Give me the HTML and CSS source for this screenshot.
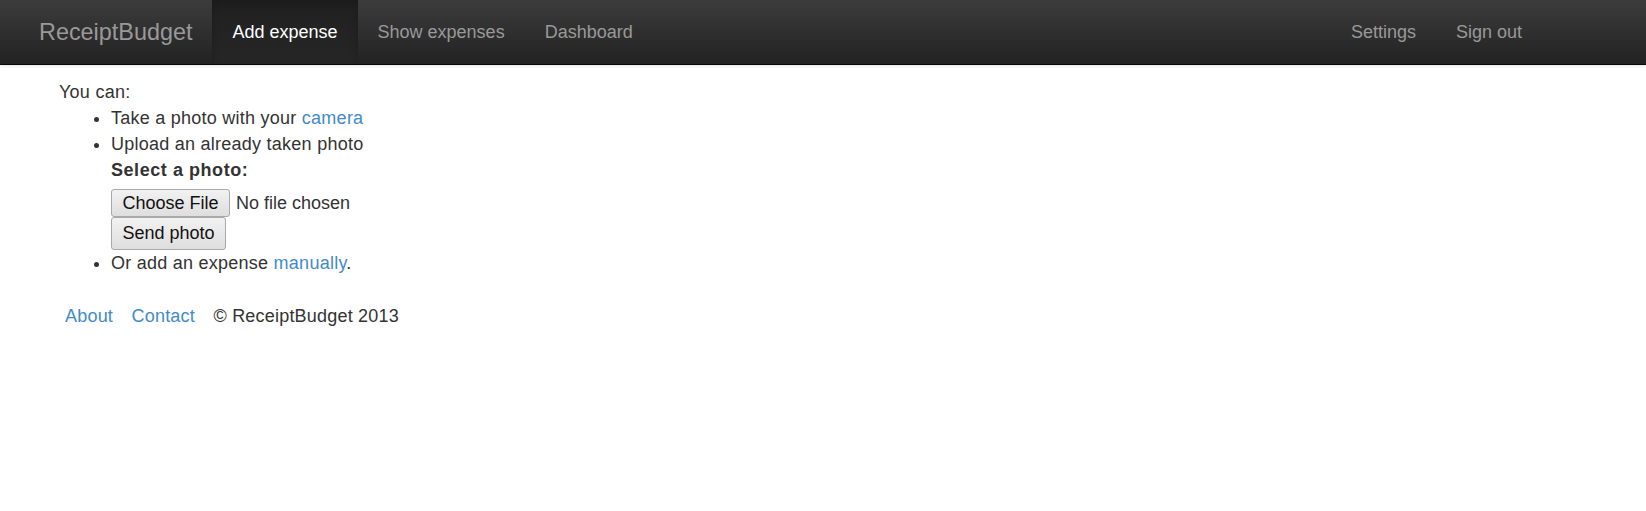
FILE: index.html
```html
<!DOCTYPE html>
<html lang="en">
<head>
<meta charset="utf-8">
<title>ReceiptBudget - Add expense</title>
<link rel="stylesheet" href="styles.css">
</head>
<body>
<nav class="navbar">
  <a class="brand" href="#">ReceiptBudget</a>
  <ul class="nav">
    <li class="active"><a href="#">Add expense</a></li>
    <li><a href="#">Show expenses</a></li>
    <li><a href="#">Dashboard</a></li>
  </ul>
  <ul class="nav nav-right">
    <li><a href="#">Settings</a></li>
    <li><a href="#">Sign out</a></li>
  </ul>
</nav>

<main class="content">
  <p class="intro">You can:</p>
  <ul class="options">
    <li>Take a photo with your <a href="#">camera</a></li>
    <li>Upload an already taken photo
      <form class="upload">
        <label class="label" for="photo">Select a photo:</label>
        <input class="file" id="photo" type="file">
        <button class="btn" type="button">Send photo</button>
      </form>
    </li>
    <li>Or add an expense <a href="#">manually</a>.</li>
  </ul>
</main>

<footer class="footer">
  <a href="#">About</a>
  <a href="#">Contact</a>
  <span>&copy; ReceiptBudget 2013</span>
</footer>
</body>
</html>
```

FILE: styles.css
```css
* {
  box-sizing: border-box;
}

html, body {
  margin: 0;
  padding: 0;
  background: #fff;
}

body {
  font-family: "Liberation Sans", Arial, Helvetica, sans-serif;
  font-size: 18px;
  line-height: 26px;
  color: #333;
}

a {
  color: #428bca;
  text-decoration: none;
}

/* Navbar */
.navbar {
  display: flex;
  align-items: stretch;
  height: 65px;
  padding: 0 104px 0 19px;
  background: linear-gradient(to bottom, #3c3c3c 0%, #222 100%);
  border-bottom: 1px solid #080808;
  box-shadow: 0 1px 3px rgba(0, 0, 0, 0.12);
}

.brand {
  display: flex;
  align-items: center;
  padding: 0 20px;
  font-size: 23.4px;
  color: #999;
}

.nav {
  display: flex;
  margin: 0;
  padding: 0;
  list-style: none;
}

.nav li {
  display: flex;
}

.nav li a {
  display: flex;
  align-items: center;
  padding: 0 20px;
  color: #999;
  font-size: 18px;
}

.nav li.active a {
  color: #fff;
  background: linear-gradient(to bottom, #202020 0%, #262626 100%);
  box-shadow: inset 0 3px 9px rgba(0, 0, 0, 0.2);
}

.nav-right {
  margin-left: auto;
}

/* Content */
.content {
  padding: 14px 0 0 59px;
  letter-spacing: 0.25px;
}

.intro {
  margin: 0;
}

.options {
  margin: 0 0 13px;
  padding-left: 52px;
}

.upload {
  margin: 0;
}

.label {
  display: block;
  font-weight: bold;
  margin-bottom: 5.5px;
  letter-spacing: 0.55px;
}

.file {
  display: block;
  font-family: inherit;
  font-size: 18px;
  line-height: 22px;
  color: #333;
  margin: 0;
  padding: 0;
  letter-spacing: 0;
}

.file::file-selector-button {
  font-family: inherit;
  font-size: 18px;
  line-height: 22px;
  color: #111;
  margin: 0 6px 0 0;
  padding: 2px 10.5px;
  border: 1px solid #a9a9a9;
  border-radius: 3px;
  background: linear-gradient(to bottom, #f2f2f2 0%, #dedede 100%);
}

.btn {
  display: block;
  font-family: inherit;
  font-size: 18px;
  line-height: 26px;
  color: #111;
  margin: 0;
  padding: 2.5px 10.5px;
  border: 1px solid #a9a9a9;
  border-radius: 3px;
  background: linear-gradient(to bottom, #f2f2f2 0%, #dedede 100%);
  letter-spacing: 0;
}

/* Footer */
.footer {
  display: flex;
  gap: 18.5px;
  padding: 14px 0 0 65px;
  letter-spacing: 0.2px;
}
```
